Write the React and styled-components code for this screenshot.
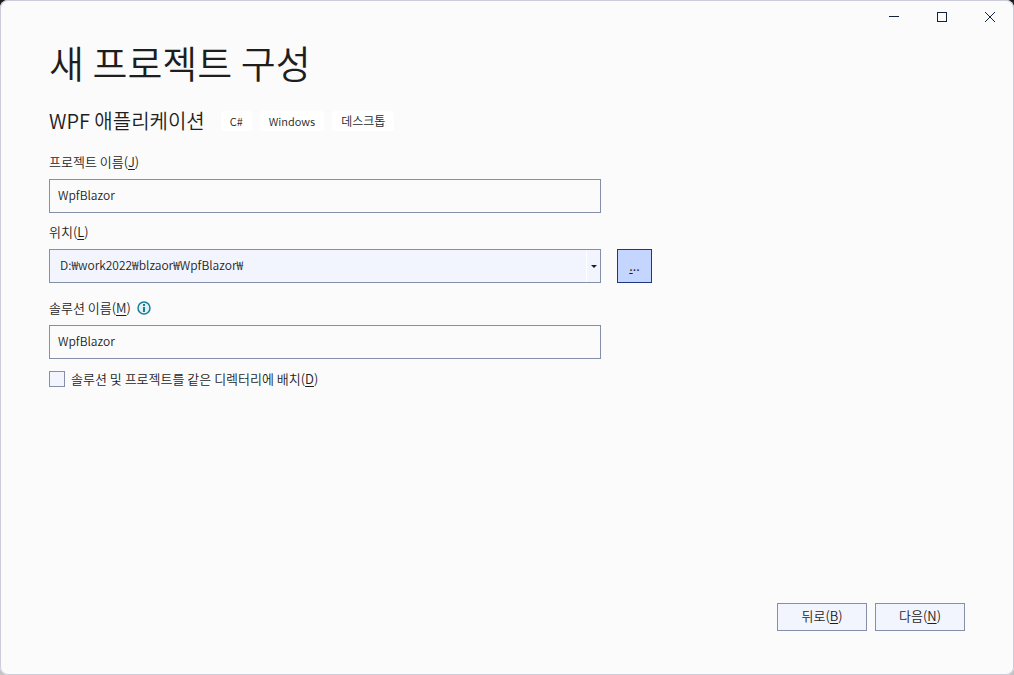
import React from "react";
import styled, { createGlobalStyle } from "styled-components";

const GlobalStyle = createGlobalStyle`
  *, *::before, *::after { box-sizing: border-box; }
  body {
    margin: 0;
    background: linear-gradient(#1c1c1c 50%, #c4c4c4 50%);
    color: #1e1e1e;
    font-family: "Noto Sans CJK KR", "Noto Sans", sans-serif;
    font-size: 13px;
    font-weight: 350;
    line-height: 20px;
  }
  button, input, select { font: inherit; color: inherit; margin: 0; }
`;

const Window = styled.div`
  display: flex;
  flex-direction: column;
  min-height: 100vh;
  background: #fbfbfb;
  border-radius: 8px;
  box-shadow: inset 0 0 0 1px #ccccdb;
`;

const TitleBar = styled.header`
  display: flex;
  justify-content: flex-end;
`;

const CaptionButton = styled.button`
  display: grid;
  place-items: center;
  width: 48px;
  height: 34px;
  padding: 0;
  border: 0;
  background: none;
`;

const Content = styled.main`
  flex: 1;
  padding: 0 49px;
`;

const Title = styled.h1`
  margin: 0;
  font-size: 38px;
  font-weight: 350;
  line-height: 56px;
`;

const Template = styled.div`
  display: flex;
  flex-wrap: wrap;
  align-items: center;
  gap: 8px;
  margin-top: 16px;
`;

const TemplateName = styled.h2`
  margin: 0 8px 0 0;
  font-size: 20px;
  font-weight: 350;
  line-height: 30px;
`;

const Tag = styled.span`
  padding: 0 9px;
  border-radius: 3px;
  background: #ffffff;
  font-size: 11px;
  &:lang(ko) { font-size: 12px; }
`;

const Form = styled.form`
  margin-top: 16px;
`;

const Field = styled.div`
  margin-bottom: ${(p) => p.$gap}px;
`;

const LabelRow = styled.div`
  display: flex;
  align-items: center;
  gap: 6px;
  margin-bottom: 7px;
`;

const Key = styled.u`
  text-decoration-thickness: 1px;
  text-underline-offset: 2px;
`;

const TextInput = styled.input`
  display: block;
  width: 100%;
  max-width: 552px;
  height: 34px;
  padding: 0 8px 3px;
  border: 1px solid #858fa8;
  border-radius: 0;
  background: #fbfbfb;
  font-size: 12px;
  outline: 0;
`;

const LocationRow = styled.div`
  display: flex;
  gap: 16px;
`;

const Combo = styled.div`
  display: grid;
  flex: 0 1 552px;
  min-width: 0;
  grid-template-columns: 1fr 14px;
  align-items: center;
  height: 34px;
  border: 1px solid #858fa8;
  background: #f2f5fd;
`;

const ComboSelect = styled.select`
  grid-area: 1 / 1 / 2 / 3;
  width: 100%;
  height: 32px;
  padding: 0 24px 3px 10px;
  border: 0;
  appearance: none;
  background: none;
  font-size: 12px;
  outline: 0;
`;

const ComboArrow = styled.span`
  grid-area: 1 / 2 / 2 / 3;
  display: grid;
  place-items: center;
  height: 32px;
  border-left: 1px solid #ffffff;
  pointer-events: none;
`;

const BrowseButton = styled.button`
  width: 35px;
  height: 34px;
  padding: 0;
  border: 1px solid #1f377f;
  background: #c4d5ff;
`;

const CheckLabel = styled.label`
  display: flex;
  align-items: center;
  gap: 6px;
`;

const CheckBox = styled.input`
  width: 16px;
  height: 16px;
  border: 1px solid #858fa8;
  appearance: none;
  background: #f2f5fd;
  &:checked { background: #5d6b99; }
`;

const Footer = styled.footer`
  display: flex;
  justify-content: flex-end;
  gap: 8px;
  padding: 0 49px 44px;
`;

const FooterButton = styled.button`
  width: 90px;
  height: 28px;
  padding: 0 0 2px;
  border: 1px solid #858fa8;
  background: #f2f5fd;
`;

export default function App() {
  return (
    <>
      <GlobalStyle />
      <Window>
        <TitleBar>
          <CaptionButton aria-label="최소화">
            <svg width="10" height="10" shapeRendering="crispEdges">
              <path d="M0 4.500H10" stroke="#14213d" />
            </svg>
          </CaptionButton>
          <CaptionButton aria-label="최대화">
            <svg width="10" height="10" shapeRendering="crispEdges">
              <rect x="0.5" y="0.5" width="9" height="9" fill="none" stroke="#14213d" />
            </svg>
          </CaptionButton>
          <CaptionButton aria-label="닫기">
            <svg width="10" height="10">
              <path d="M0 0L10 10M10 0L0 10" stroke="#14213d" />
            </svg>
          </CaptionButton>
        </TitleBar>
        <Content>
          <Title>새 프로젝트 구성</Title>
          <Template>
            <TemplateName>WPF 애플리케이션</TemplateName>
            <Tag>C#</Tag>
            <Tag>Windows</Tag>
            <Tag lang="ko">데스크톱</Tag>
          </Template>
          <Form id="project" onSubmit={(e) => e.preventDefault()}>
            <Field $gap={9}>
              <LabelRow>
                <label htmlFor="name">프로젝트 이름(<Key>J</Key>)</label>
              </LabelRow>
              <TextInput id="name" defaultValue="WpfBlazor" />
            </Field>
            <Field $gap={15}>
              <LabelRow>
                <label htmlFor="location">위치(<Key>L</Key>)</label>
              </LabelRow>
              <LocationRow>
                <Combo>
                  <ComboSelect id="location">
                    <option>D:₩work2022₩blzaor₩WpfBlazor₩</option>
                  </ComboSelect>
                  <ComboArrow>
                    <svg width="6" height="3">
                      <path d="M0 0H6L3 3Z" fill="#1e1e1e" />
                    </svg>
                  </ComboArrow>
                </Combo>
                <BrowseButton type="button" aria-label="찾아보기"><Key>.</Key>..</BrowseButton>
              </LocationRow>
            </Field>
            <Field $gap={10}>
              <LabelRow>
                <label htmlFor="solution">솔루션 이름(<Key>M</Key>)</label>
                <svg width="14" height="14" viewBox="0 0 14 14" role="img" aria-label="정보">
                  <circle cx="7" cy="7" r="6" fill="#e3f1f5" stroke="#14809c" strokeWidth="1.5" />
                  <path d="M7 3V5M7 6V11" stroke="#14809c" strokeWidth="2" />
                </svg>
              </LabelRow>
              <TextInput id="solution" defaultValue="WpfBlazor" />
            </Field>
            <CheckLabel>
              <CheckBox type="checkbox" />
              <span>솔루션 및 프로젝트를 같은 디렉터리에 배치(<Key>D</Key>)</span>
            </CheckLabel>
          </Form>
        </Content>
        <Footer>
          <FooterButton type="button">뒤로(<Key>B</Key>)</FooterButton>
          <FooterButton type="submit" form="project">다음(<Key>N</Key>)</FooterButton>
        </Footer>
      </Window>
    </>
  );
}
